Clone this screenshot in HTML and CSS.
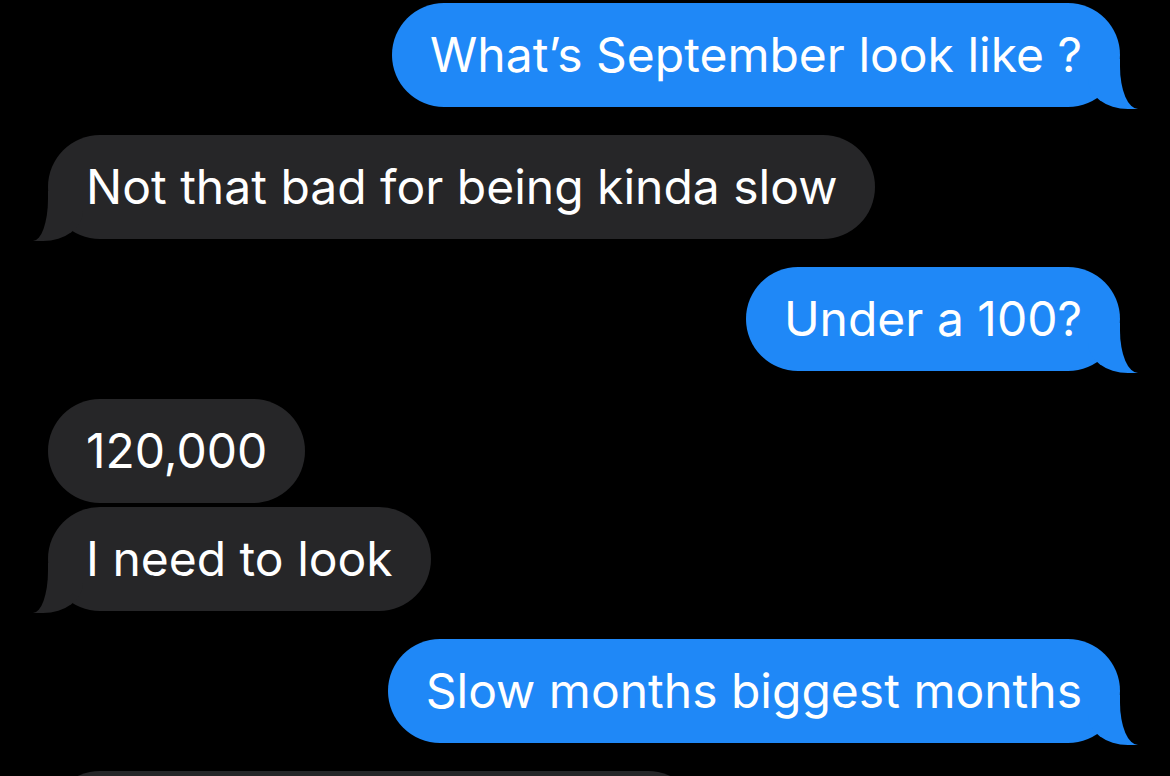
FILE: index.html
```html
<!DOCTYPE html>
<html lang="en">
<head>
    <meta charset="UTF-8">
    <meta name="viewport" content="width=device-width, initial-scale=1.0">
    <title>Messages</title>
    <link rel="stylesheet" href="styles.css">
</head>
<body>
    <div class="thread">
        <div class="group">
            <div class="bubble sent tail">What’s September look like ?</div>
        </div>
        <div class="group">
            <div class="bubble received tail">Not that bad for being kinda slow</div>
        </div>
        <div class="group">
            <div class="bubble sent tail">Under a 100?</div>
        </div>
        <div class="group">
            <div class="bubble received">120,000</div>
            <div class="bubble received tail">I need to look</div>
        </div>
        <div class="group">
            <div class="bubble sent tail">Slow months biggest months</div>
        </div>
        <div class="group">
            <div class="bubble received wide">&nbsp;</div>
        </div>
    </div>
</body>
</html>
```

FILE: styles.css
```css
html, body {
    margin: 0;
    background: #000;
}

body {
    font-family: Inter, "Liberation Sans", Arial, sans-serif;
    overflow: hidden;
    height: 776px;
}

.thread {
    display: flex;
    flex-direction: column;
    gap: 28px;
    padding: 3px 50px 0 48px;
}

.group {
    display: flex;
    flex-direction: column;
    gap: 4px;
}

.bubble {
    position: relative;
    height: 104px;
    line-height: 104px;
    padding: 0 38px;
    border-radius: 52px;
    font-size: 48px;
    color: #fff;
    white-space: nowrap;
}

.sent {
    align-self: flex-end;
    background: #1f88f7;
}

.received {
    align-self: flex-start;
    background: #262628;
}

.wide {
    width: 576px;
}

/* the little curled tail under the last bubble of a run */
.tail::before,
.tail::after {
    content: "";
    position: absolute;
    bottom: -2px;
    height: 50px;
}

.sent.tail::before {
    right: -18px;
    width: 50px;
    background: #1f88f7;
    border-bottom-left-radius: 40px 30px;
}

.sent.tail::after {
    right: -40px;
    width: 40px;
    background: #000;
    border-bottom-left-radius: 18px 42px;
}

.received.tail::before {
    left: -15px;
    width: 50px;
    background: #262628;
    border-bottom-right-radius: 40px 30px;
}

.received.tail::after {
    left: -40px;
    width: 40px;
    background: #000;
    border-bottom-right-radius: 15px 42px;
}
```
